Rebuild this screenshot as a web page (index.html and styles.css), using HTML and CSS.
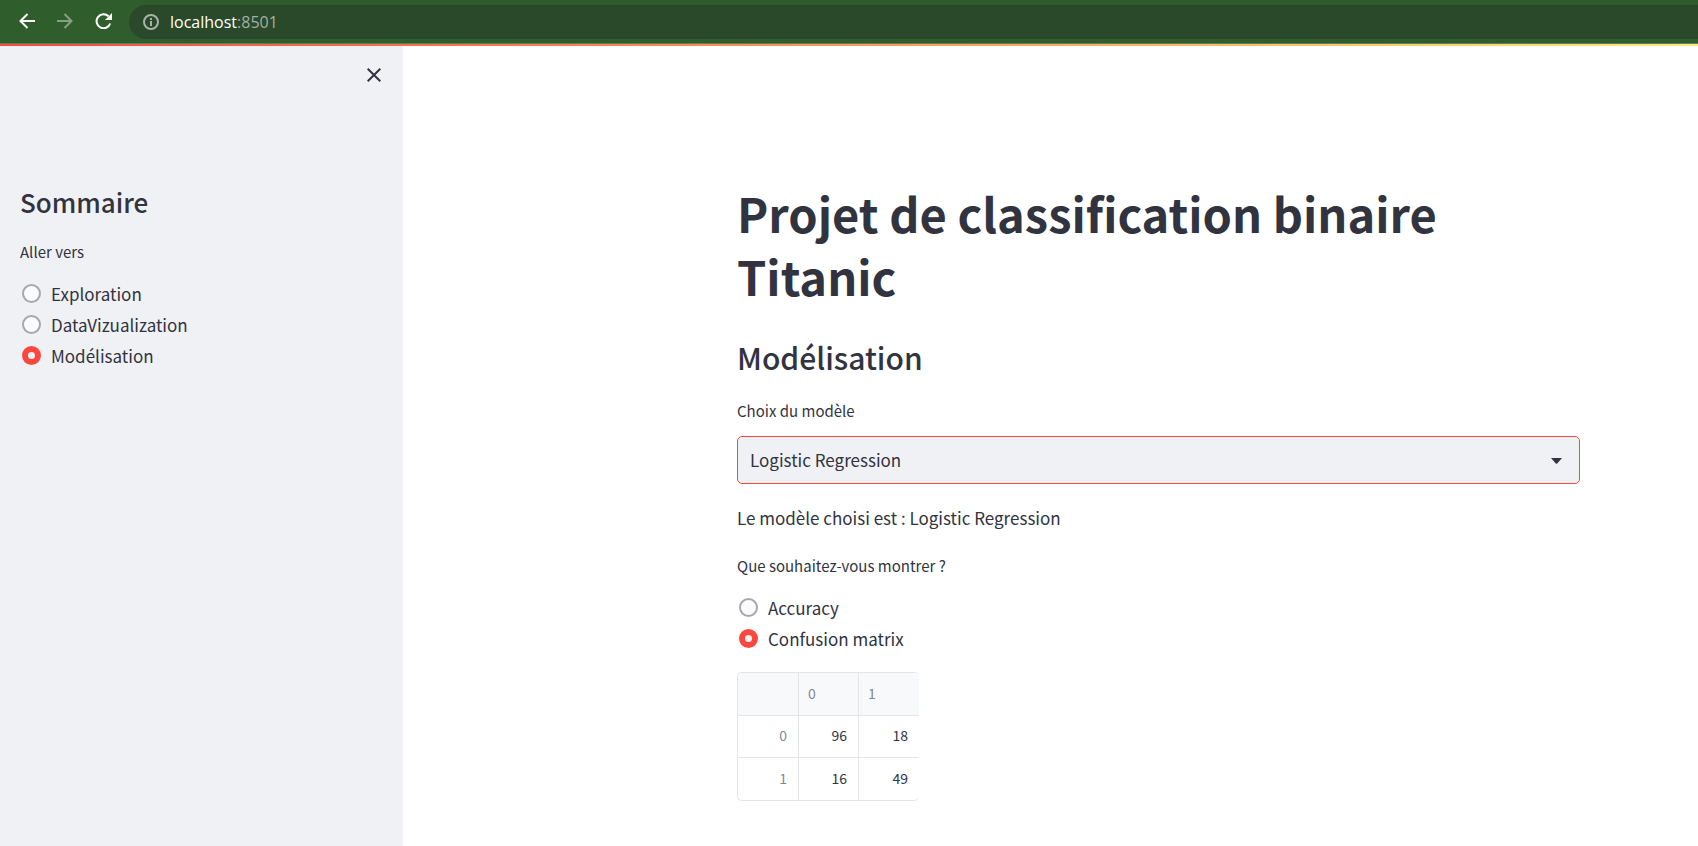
FILE: index.html
```html
<!DOCTYPE html>
<html lang="fr">
<head>
<meta charset="utf-8">
<title>Projet de classification binaire Titanic</title>
<link rel="stylesheet" href="styles.css">
</head>
<body>
<header class="toolbar">
  <nav class="nav-buttons" aria-label="Navigation">
    <button class="icon-button" type="button" aria-label="Retour">
      <svg width="16" height="16" viewBox="0 0 16 16" fill="none" stroke="currentColor" stroke-width="2"><path d="M16 8H1.5M8.5 1L1.5 8l7 7"/></svg>
    </button>
    <button class="icon-button" type="button" aria-label="Suivant" disabled>
      <svg width="16" height="16" viewBox="0 0 16 16" fill="none" stroke="currentColor" stroke-width="2"><path d="M0 8h14.500M7.500 1l7 7-7 7"/></svg>
    </button>
    <button class="icon-button" type="button" aria-label="Actualiser">
      <svg width="18" height="16" viewBox="0 0 18 16"><path d="M15.200 10.500A7 7 0 1 1 13.500 3.200" fill="none" stroke="currentColor" stroke-width="2"/><path d="M17 0v7h-7z" fill="currentColor"/></svg>
    </button>
  </nav>
  <div class="address">
    <svg width="16" height="16" viewBox="0 0 16 16" aria-hidden="true"><circle cx="8" cy="8" r="7" fill="none" stroke="currentColor" stroke-width="2"/><path d="M7 7h2v5H7zM7 4h2v2H7z" fill="currentColor"/></svg>
    <div class="url" role="textbox" contenteditable="true" aria-label="Adresse">localhost<span class="port">:8501</span></div>
  </div>
</header>
<div class="decoration"></div>
<div class="app">
  <aside class="sidebar">
    <button class="close" type="button" aria-label="Fermer">
      <svg width="14" height="14" viewBox="0 0 14 14" fill="none" stroke="currentColor" stroke-width="2"><path d="M.7.700l12.600 12.600M13.300.700L.700 13.300"/></svg>
    </button>
    <h2 class="sidebar-title">Sommaire</h2>
    <fieldset class="radio-group">
      <legend class="field-label">Aller vers</legend>
      <label class="radio"><input type="radio" name="page">Exploration</label>
      <label class="radio"><input type="radio" name="page">DataVizualization</label>
      <label class="radio"><input type="radio" name="page" checked>Modélisation</label>
    </fieldset>
  </aside>
  <main class="main">
    <h1 class="title">Projet de classification binaire Titanic</h1>
    <h2 class="subtitle">Modélisation</h2>
    <label class="field-label" for="model">Choix du modèle</label>
    <div class="select-box">
      <select class="select" id="model"><option>Logistic Regression</option></select>
      <svg class="caret" width="11" height="6" viewBox="0 0 11 6" aria-hidden="true"><path d="M0 0h11L6.200 5.400q-.7.600-1.400 0z" fill="currentColor"/></svg>
    </div>
    <p class="text">Le modèle choisi est : Logistic Regression</p>
    <fieldset class="radio-group">
      <legend class="field-label">Que souhaitez-vous montrer ?</legend>
      <label class="radio"><input type="radio" name="show">Accuracy</label>
      <label class="radio"><input type="radio" name="show" checked>Confusion matrix</label>
    </fieldset>
    <table class="matrix">
      <thead><tr><td></td><th scope="col">0</th><th scope="col">1</th></tr></thead>
      <tbody>
        <tr><th scope="row">0</th><td>96</td><td>18</td></tr>
        <tr><th scope="row">1</th><td>16</td><td>49</td></tr>
      </tbody>
    </table>
  </main>
</div>
</body>
</html>
```
FILE: styles.css
```css
* {
  box-sizing: border-box;
}

body {
  margin: 0;
  min-height: 100vh;
  display: flex;
  flex-direction: column;
  background: #fff;
  color: #31333f;
  font-family: "Noto Sans CJK JP", "Noto Sans", sans-serif;
  font-size: 17px;
  line-height: 30px;
}

button {
  padding: 0;
  border: 0;
  background: none;
  color: inherit;
  font: inherit;
}

.toolbar {
  display: flex;
  align-items: center;
  gap: 16px;
  height: 44px;
  padding: 0 0 2px 19px;
  background: #2f5e2c;
  border-bottom: 1px solid #5a7e57;
  color: #fff;
}

.nav-buttons {
  display: flex;
  gap: 22px;
}

.icon-button {
  display: flex;
  align-items: center;
}

.icon-button:disabled {
  color: #87a085;
}

.address {
  flex: 1;
  display: flex;
  align-items: center;
  gap: 11px;
  height: 34px;
  margin-top: 3px;
  padding-left: 14px;
  border-radius: 17px 0 0 17px;
  background: #2a482a;
  color: #a9b3a9;
}

.url {
  color: #fff;
  font-family: "Open Sans", "Noto Sans", sans-serif;
  font-size: 16px;
  line-height: 24px;
}

.port {
  color: #a3b0a3;
}

.decoration {
  height: 2px;
  background: linear-gradient(90deg, #f9493f, #ffe87a);
}

.app {
  flex: 1;
  display: flex;
}

.sidebar {
  flex: 0 0 403px;
  display: flex;
  flex-direction: column;
  padding: 22px 22px 22px 20px;
  background: #f0f1f5;
}

.close {
  display: flex;
  align-self: flex-end;
  margin-bottom: 104px;
}

.sidebar-title {
  margin: 0 0 22px;
  font-size: 26px;
  line-height: 32px;
  font-weight: 500;
}

.main {
  flex: 1;
  padding: 135px 118px 32px 334px;
}

.title {
  margin: 0 0 32px;
  font-size: 47px;
  line-height: 63px;
  font-weight: 700;
}

.subtitle {
  margin: 0 0 24px;
  font-size: 30px;
  line-height: 36px;
  font-weight: 500;
}

.field-label {
  display: block;
  padding: 0;
  font-size: 15px;
  line-height: 24px;
}

.select-box {
  position: relative;
  margin: 13px 0 19px;
}

.select {
  display: block;
  width: 100%;
  height: 48px;
  padding: 0 12px 1px;
  appearance: none;
  border: 1px solid #f9493f;
  border-radius: 5px;
  background: #f0f1f5;
  color: inherit;
  font: inherit;
}

.caret {
  position: absolute;
  right: 18px;
  top: 22px;
  pointer-events: none;
}

.text {
  margin: 0 0 21px;
}

.radio-group {
  display: flex;
  flex-direction: column;
  margin: 0;
  padding: 0;
  border: 0;
}

.radio-group .field-label {
  margin-bottom: 14px;
}

.radio {
  display: flex;
  align-items: center;
  gap: 10px;
  height: 31px;
  padding-left: 2px;
}

.radio input {
  appearance: none;
  width: 19px;
  height: 19px;
  margin: 0;
  border: 2px solid #a6a8ae;
  border-radius: 50%;
  background: #fbfbfd;
}

.radio input:checked {
  border: 6px solid #f9493f;
  background: #f0f1f5;
}

.matrix {
  margin-top: 18px;
  border: 1px solid #e4e5e8;
  border-right: 0;
  border-radius: 5px;
  border-spacing: 0;
  overflow: hidden;
  font-size: 14px;
  line-height: 20px;
}

.matrix th,
.matrix td {
  width: 60px;
  height: 42px;
  padding: 0 11px 3px 9px;
  border-right: 1px solid #e4e5e8;
  border-bottom: 1px solid #e4e5e8;
  text-align: right;
  font-weight: 400;
}

.matrix tr > :first-child {
  width: 61px;
}

.matrix tr > :last-child {
  border-right: 0;
}

.matrix tbody tr:last-child > * {
  border-bottom: 0;
}

.matrix thead tr > * {
  height: 43px;
  background: #f8f9fb;
  text-align: left;
}

.matrix th {
  color: #85878e;
}
```
